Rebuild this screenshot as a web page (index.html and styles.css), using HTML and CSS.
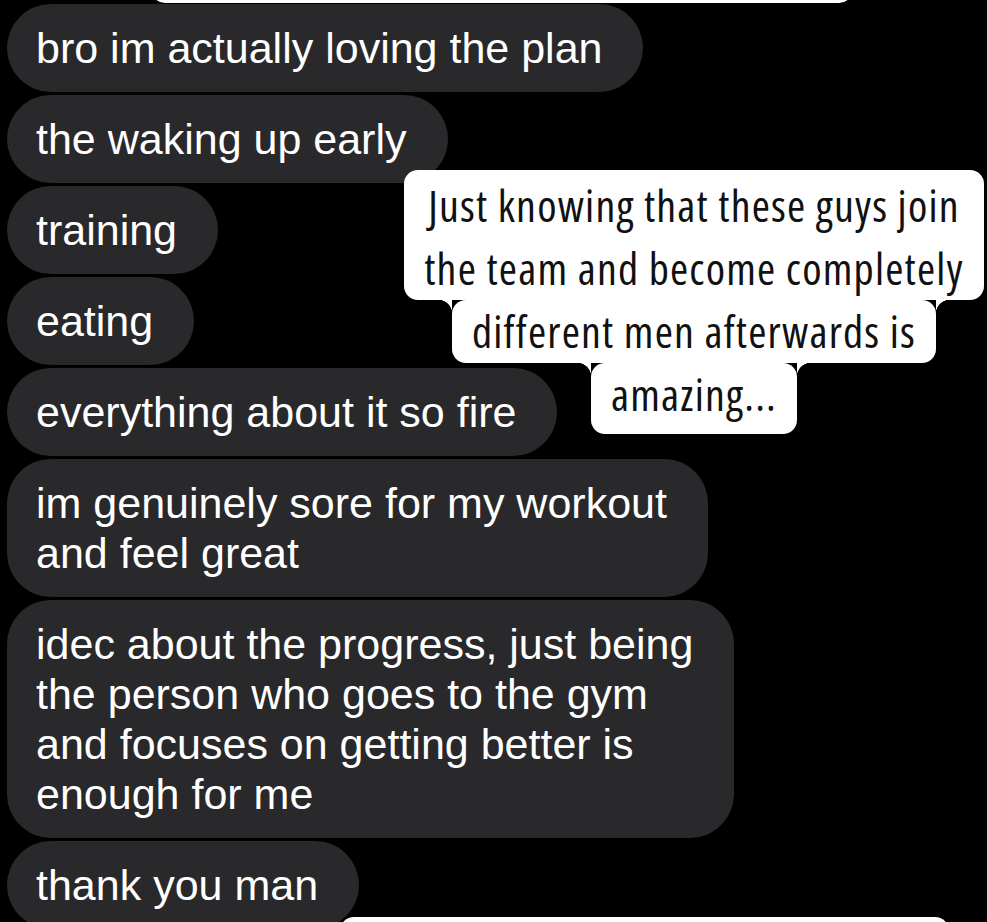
FILE: index.html
```html
<!DOCTYPE html>
<html lang="en">
<head>
  <meta charset="UTF-8">
  <title>Messages</title>
  <link rel="stylesheet" href="styles.css">
</head>
<body>
  <div class="thread">
    <div class="bubble">bro im actually loving the plan</div>
    <div class="bubble">the waking up early</div>
    <div class="bubble">training</div>
    <div class="bubble">eating</div>
    <div class="bubble">everything about it so fire</div>
    <div class="bubble">im genuinely sore for my workout<br>and feel great</div>
    <div class="bubble">idec about the progress, just being<br>the person who goes to the gym<br>and focuses on getting better is<br>enough for me</div>
    <div class="bubble">thank you man</div>
  </div>

  <!-- story caption overlays -->
  <div class="caption-edge top"></div>
  <div class="caption">
    <span class="line first">Just knowing that these guys join<br>the team and become completely</span>
    <span class="line joined">different men afterwards is</span>
    <span class="line joined last">amazing...</span>
  </div>
  <div class="caption-edge bottom"></div>
</body>
</html>
```

FILE: styles.css
```css
body {
  background: #000;
  margin: 0;
  height: 922px;
  overflow: hidden;
  position: relative;
}
.thread {
  display: flex;
  flex-direction: column;
  align-items: flex-start;
  gap: 3px;
  padding: 4px 0 0 7px;
}
.bubble {
  background: #29292b;
  color: #fff;
  font-family: "Liberation Sans", Arial, sans-serif;
  font-size: 43px;
  line-height: 50px;
  padding: 19px 41px 19px 29px;
  border-radius: 44px;
  white-space: nowrap;
}
.caption {
  position: absolute;
  top: 170px;
  left: 394px;
  width: 600px;
  display: flex;
  flex-direction: column;
  align-items: center;
  font-family: "Open Sans", sans-serif;
  font-stretch: condensed;
  font-weight: 500;
  font-size: 44px;
  letter-spacing: 1.2px;
  line-height: 63px;
  color: #111;
  text-align: center;
}
.line {
  position: relative;
  display: block;
  background: #fff;
  padding: 0 20px;
  border-radius: 14px;
  white-space: nowrap;
}
.line.first {
  padding-top: 4px;
}
.line.last {
  padding-bottom: 8px;
}
.line.joined::before,
.line.joined::after {
  content: "";
  position: absolute;
  top: 0;
  width: 14px;
  height: 14px;
}
.line.joined::before {
  left: -14px;
  background: radial-gradient(circle at 0 100%, transparent 14px, #fff 14.5px);
}
.line.joined::after {
  right: -14px;
  background: radial-gradient(circle at 100% 100%, transparent 14px, #fff 14.5px);
}
.caption-edge {
  position: absolute;
  background: #fff;
  border-radius: 14px;
}
.caption-edge.top {
  top: -30px;
  left: 151px;
  width: 702px;
  height: 33px;
}
.caption-edge.bottom {
  top: 917px;
  left: 340px;
  width: 609px;
  height: 40px;
}
```
